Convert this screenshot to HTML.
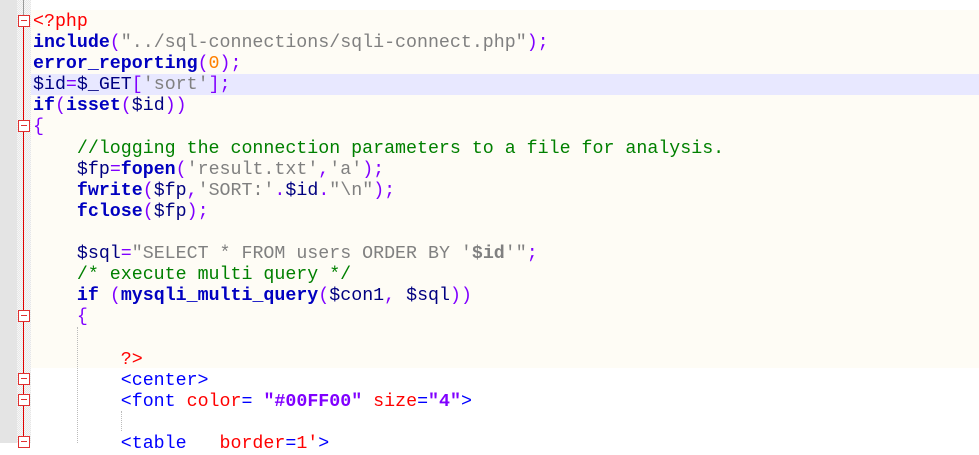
<!DOCTYPE html>
<html><head><meta charset="utf-8"><style>
*{margin:0;padding:0}
body{width:979px;height:443px;overflow:hidden;background:#fff;position:relative;font-family:"Liberation Mono","Courier New",monospace;font-size:18.3px}
#g1{position:absolute;left:0;top:0;width:17px;height:443px;background:#e4e4e4}
#g2{position:absolute;left:17px;top:0;width:14px;height:443px;background-color:#f4f4f4;background-image:repeating-conic-gradient(#e6e6e6 0 25%,#f7f7f7 0 50%);background-size:2px 2px}
#beige{position:absolute;left:31px;top:10px;width:948px;height:358px;background:#fefcf5}
#cur{position:absolute;left:31px;top:73.5px;width:948px;height:21px;background:#e8e8ff}
#code{position:absolute;left:33px;top:12px;white-space:pre;line-height:21.1px;color:#000}
.k{color:#0000c0;font-weight:bold}.s{color:#808080}.p{color:#8000ff}.v{color:#000080}.n{color:#ff8000}.c{color:#008000}.r{color:#ff0000}.t{color:#0000ff}.a{color:#ff0000}.av{color:#8000ff;font-weight:bold}
.fold{position:absolute;left:18px;width:10px;height:10px;border:1px solid #e03030;background:#fff}
.fold:after{content:"";position:absolute;left:2px;top:4px;width:6px;height:1px;background:#e03030}
#rl{position:absolute;left:23px;top:27px;width:1px;height:416px;background:#e00000}
#gl{position:absolute;left:23px;top:0;width:1px;height:15px;background:#999}
.ig{position:absolute;width:0;border-left:1px dotted #bbb}
</style></head><body>
<div id="g1"></div><div id="g2"></div><div id="beige"></div><div id="cur"></div>
<div id="gl"></div><div id="rl"></div>
<div class="fold" style="top:15px"></div>
<div class="fold" style="top:120px"></div>
<div class="fold" style="top:310px"></div>
<div class="fold" style="top:373px"></div>
<div class="fold" style="top:394px"></div>
<div class="fold" style="top:436px"></div>
<div class="ig" style="left:77px;top:327px;height:116px"></div>
<div class="ig" style="left:121px;top:411px;height:20px"></div>
<div id="code"><span class="r">&lt;?php</span>
<span class="k">include</span><span class="p">(</span><span class="s">"../sql-connections/sqli-connect.php"</span><span class="p">);</span>
<span class="k">error_reporting</span><span class="p">(</span><span class="n">0</span><span class="p">);</span>
<span class="v">$id</span><span class="p">=</span><span class="v">$_GET</span><span class="p">[</span><span class="s">'sort'</span><span class="p">];</span>
<span class="k">if</span><span class="p">(</span><span class="k">isset</span><span class="p">(</span><span class="v">$id</span><span class="p">))</span>
<span class="p">{</span>
    <span class="c">//logging the connection parameters to a file for analysis.</span>
    <span class="v">$fp</span><span class="p">=</span><span class="k">fopen</span><span class="p">(</span><span class="s">'result.txt'</span><span class="p">,</span><span class="s">'a'</span><span class="p">);</span>
    <span class="k">fwrite</span><span class="p">(</span><span class="v">$fp</span><span class="p">,</span><span class="s">'SORT:'</span><span class="p">.</span><span class="v">$id</span><span class="p">.</span><span class="s">"\n"</span><span class="p">);</span>
    <span class="k">fclose</span><span class="p">(</span><span class="v">$fp</span><span class="p">);</span>

    <span class="v">$sql</span><span class="p">=</span><span class="s">"SELECT * FROM users ORDER BY '<b>$id</b>'"</span><span class="p">;</span>
    <span class="c">/* execute multi query */</span>
    <span class="k">if</span> <span class="p">(</span><span class="k">mysqli_multi_query</span><span class="p">(</span><span class="v">$con1</span><span class="p">,</span> <span class="v">$sql</span><span class="p">))</span>
    <span class="p">{</span>

        <span class="r">?&gt;</span>
        <span class="t">&lt;center&gt;</span>
        <span class="t">&lt;font</span> <span class="a">color</span><span class="t">=</span> <span class="av">"#00FF00"</span> <span class="a">size</span><span class="t">=</span><span class="av">"4"</span><span class="t">&gt;</span>

        <span class="t">&lt;table</span>   <span class="a">border</span><span class="t">=</span><span class="a">1'</span><span class="t">&gt;</span></div>
</body></html>
